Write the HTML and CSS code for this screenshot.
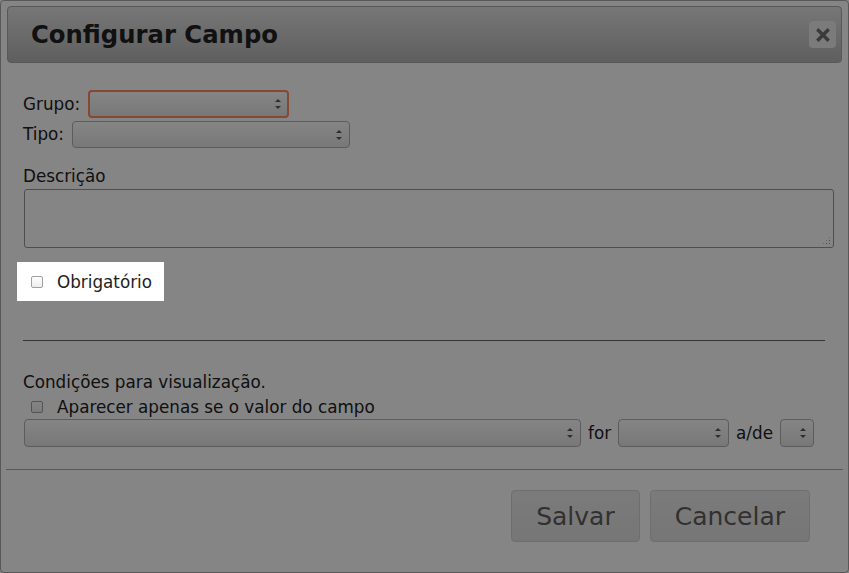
FILE: index.html
```html
<!DOCTYPE html>
<html lang="pt">

<head>
    <meta charset="UTF-8">
    <meta name="viewport" content="width=device-width, initial-scale=1.0">
    <title>Configurar Campo</title>
    <link rel="stylesheet" href="styles.css">
</head>
<body>
    <div class="dialog">
        <div class="titlebar">
            <span class="title">Configurar Campo</span>
            <button class="close-button" title="Fechar">
                <svg width="14" height="14" viewBox="0 0 14 14">
                    <path d="M2.5 2.5 L11.5 11.5 M11.5 2.5 L2.5 11.5" stroke="#6f6f6f" stroke-width="3.4" stroke-linecap="square"/>
                </svg>
            </button>
        </div>

        <div class="content">
            <div class="field-row">
                <label for="grupo">Grupo:</label>
                <span class="select-wrap">
                    <select id="grupo" class="select select-grupo"></select>
                </span>
            </div>
            <div class="field-row field-row-tipo">
                <label for="tipo">Tipo:</label>
                <span class="select-wrap">
                    <select id="tipo" class="select select-tipo"></select>
                </span>
            </div>

            <label class="block-label" for="descricao">Descrição</label>
            <div class="description-wrap">
                <textarea id="descricao" class="description"></textarea>
            </div>

            <div class="highlight">
                <label class="check-label">
                    <input type="checkbox" class="checkbox">
                    Obrigatório
                </label>
            </div>

            <hr class="divider">

            <div class="section-title">Condições para visualização.</div>
            <label class="check-label check-label-cond">
                <input type="checkbox" class="checkbox">
                Aparecer apenas se o valor do campo
            </label>
            <div class="condition-row">
                <span class="select-wrap">
                    <select class="select select-campo"></select>
                </span>
                <span>for</span>
                <span class="select-wrap">
                    <select class="select select-operador"></select>
                </span>
                <span>a/de</span>
                <span class="select-wrap">
                    <select class="select select-valor"></select>
                </span>
            </div>
        </div>

        <div class="buttonpane">
            <button class="button">Salvar</button>
            <button class="button">Cancelar</button>
        </div>
    </div>

    <!-- tour overlay, only the highlighted field stays on top -->
    <div class="overlay"></div>
</body>
</html>
```

FILE: styles.css
```css
html,
body {
    margin: 0;
    padding: 0;
    height: 100%;
}

body {
    position: relative;
    font-family: "DejaVu Sans", sans-serif;
    font-size: 16.8px;
    color: #222;
    background-color: #fff;
    overflow: hidden;
}

.dialog {
    box-sizing: border-box;
    height: 573px;
    border: 1px solid #aaa;
    border-radius: 4px;
    padding: 5px 6px 0;
    background-color: #fff;
}

.titlebar {
    box-sizing: border-box;
    height: 57px;
    display: flex;
    align-items: center;
    justify-content: space-between;
    padding: 0 5px 0 23px;
    border: 1px solid #aaa;
    border-radius: 4px;
    background: linear-gradient(#e4e4e4, #b6b6b6);
}

.title {
    font-size: 24.3px;
    font-weight: bold;
    color: #222;
}

.close-button {
    width: 27px;
    height: 27px;
    padding: 0;
    border: none;
    border-radius: 4px;
    background-color: #ececec;
    display: flex;
    align-items: center;
    justify-content: center;
}

.content {
    padding: 27px 8px 0 16px;
    line-height: 19px;
}

.field-row {
    display: flex;
    align-items: center;
    gap: 8px;
}

.field-row-tipo {
    margin-top: 3px;
}

.select-wrap {
    position: relative;
    display: inline-flex;
}

.select-wrap::before,
.select-wrap::after {
    content: "";
    position: absolute;
    right: 8px;
    border-left: 3px solid transparent;
    border-right: 3px solid transparent;
    pointer-events: none;
}

.select-wrap::before {
    top: calc(50% - 5px);
    border-bottom: 3px solid #5a5a5a;
}

.select-wrap::after {
    top: calc(50% + 2px);
    border-top: 3px solid #5a5a5a;
}

.select {
    appearance: none;
    -webkit-appearance: none;
    box-sizing: border-box;
    margin: 0;
    border: 1px solid #b0b0b0;
    border-radius: 4px;
    background: linear-gradient(#fff, #e6e6e6);
    font-family: inherit;
    font-size: 14px;
}

.select-grupo {
    width: 201px;
    height: 28px;
    border: 2px solid #ff8a5c;
}

.select-tipo {
    width: 278px;
    height: 27px;
}

.block-label {
    display: block;
    margin-top: 19px;
}

.description-wrap {
    position: relative;
    width: 810px;
    margin: 3px 0 0 1px;
}

/* dotted resize grip like the original browser */
.description-wrap::after {
    content: "";
    position: absolute;
    right: 3px;
    bottom: 3px;
    width: 9px;
    height: 9px;
    background-image: radial-gradient(circle, #8a8a8a 0.8px, transparent 1px);
    background-size: 3px 3px;
    clip-path: polygon(100% 0, 100% 100%, 0 100%);
    pointer-events: none;
}

.description {
    display: block;
    box-sizing: border-box;
    width: 810px;
    height: 59px;
    margin: 0;
    border: 1px solid #969696;
    border-radius: 3px;
    background-color: #fff;
    resize: none;
    font-family: inherit;
}

.highlight {
    position: relative;
    z-index: 2;
    display: inline-block;
    margin: 14px 0 0 -6px;
    padding: 11px 12px 9px 14px;
    background-color: #fff;
    vertical-align: top;
}

.check-label {
    display: flex;
    align-items: center;
    gap: 14px;
}

.check-label-cond {
    margin: 6px 0 0 8px;
}

.checkbox {
    appearance: none;
    -webkit-appearance: none;
    box-sizing: border-box;
    width: 12px;
    height: 12px;
    margin: -2px 0 0;
    border: 1px solid #a0a0a0;
    border-radius: 2px;
    background: linear-gradient(#fff, #ededed);
}

.divider {
    margin: 39px 9px 0 0;
    border: none;
    border-top: 1px solid #666;
}

.section-title {
    margin-top: 32px;
}

.condition-row {
    display: flex;
    align-items: center;
    gap: 7px;
    margin: 2px 0 0 1px;
}

.select-campo {
    width: 557px;
    height: 28px;
}

.select-operador {
    width: 111px;
    height: 28px;
}

.select-valor {
    width: 34px;
    height: 28px;
}

.buttonpane {
    display: flex;
    justify-content: flex-end;
    gap: 10px;
    margin: 22px -1px 0;
    padding: 20px 33px 0 0;
    border-top: 1px solid #aaa;
}

.button {
    height: 52px;
    padding: 0 24px;
    border: 1px solid #d3d3d3;
    border-radius: 4px;
    background: linear-gradient(#ececec, #e3e3e3);
    color: #5e5e5e;
    font-family: inherit;
    font-size: 25px;
}

.overlay {
    position: absolute;
    inset: 0;
    z-index: 1;
    background-color: rgba(0, 0, 0, 0.48);
}
```
